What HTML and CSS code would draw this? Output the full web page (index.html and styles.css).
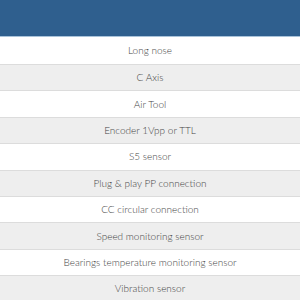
FILE: index.html
```html
<!DOCTYPE html>
<html>
<head>
<meta charset="utf-8">
<link rel="stylesheet" href="styles.css">
</head>
<body>
<div class="table">
  <div class="head"></div>
  <div class="row first">Long nose</div>
  <div class="row alt">C Axis</div>
  <div class="row">Air Tool</div>
  <div class="row alt">Encoder 1Vpp or TTL</div>
  <div class="row">S5 sensor</div>
  <div class="row alt">Plug &amp; play PP connection</div>
  <div class="row">CC circular connection</div>
  <div class="row alt">Speed monitoring sensor</div>
  <div class="row">Bearings temperature monitoring sensor</div>
  <div class="row alt">Vibration sensor</div>
</div>
</body>
</html>
```
FILE: styles.css
```css
html, body {
  margin: 0;
  padding: 0;
  background: #ffffff;
}
.table {
  width: 300px;
  font-family: Lato, "Liberation Sans", sans-serif;
  font-size: 10px;
  font-weight: 300;
  color: #444444;
}
.head {
  height: 36px;
  background: #2f5f8e;
  border-bottom: 1px solid #a9c3da;
}
.row {
  box-sizing: border-box;
  height: 26.4px;
  border-top: 1px solid #dcdcdc;
  display: flex;
  align-items: center;
  justify-content: center;
  background: #ffffff;
  padding-bottom: 1px;
}
.row.first {
  height: 27px;
  border-top: none;
}
.row.alt {
  background: #eeeeee;
}
```
